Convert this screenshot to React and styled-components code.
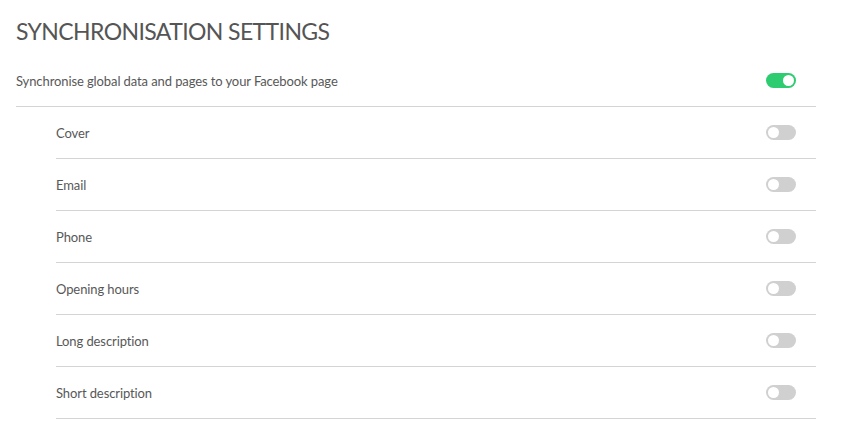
import React, { useState } from 'react';
import styled, { createGlobalStyle } from 'styled-components';

const GlobalStyle = createGlobalStyle`
  body {
    margin: 0;
    background: #fff;
    font-family: Lato, "Open Sans", sans-serif;
    color: #555;
  }
`;

const Page = styled.div`
  width: 800px;
  padding: 16px 16px 0;
`;

const Title = styled.h1`
  margin: 0 0 9px;
  font-size: 23px;
  line-height: 30px;
  font-weight: 400;
  color: #555;
  letter-spacing: -0.6px;
`;

const Row = styled.div`
  display: flex;
  align-items: center;
  justify-content: space-between;
  height: 51px;
  margin-left: ${props => (props.nested ? '40px' : '0')};
  padding-right: 20px;
  border-bottom: 1px solid #d4d4d4;
`;

const Label = styled.span`
  font-size: 13px;
  color: #585858;
  letter-spacing: -0.1px;
`;

const Track = styled.button`
  position: relative;
  width: 30px;
  height: 15px;
  padding: 0;
  border: none;
  border-radius: 8px;
  background: ${props => (props.on ? '#2ecc71' : '#d0d0d0')};
  cursor: pointer;
`;

const Knob = styled.span`
  position: absolute;
  top: 2px;
  left: ${props => (props.on ? '17px' : '2px')};
  width: 11px;
  height: 11px;
  border-radius: 50%;
  background: #fff;
`;

const Toggle = ({ on, onClick }) => (
  <Track on={on ? 1 : 0} onClick={onClick}>
    <Knob on={on ? 1 : 0} />
  </Track>
);

const fields = ['Cover', 'Email', 'Phone', 'Opening hours', 'Long description', 'Short description'];

export default function App() {
  const [global, setGlobal] = useState(true);
  const [enabled, setEnabled] = useState({});

  return (
    <Page>
      <GlobalStyle />
      <Title>SYNCHRONISATION SETTINGS</Title>
      <Row>
        <Label>Synchronise global data and pages to your Facebook page</Label>
        <Toggle on={global} onClick={() => setGlobal(!global)} />
      </Row>
      {fields.map(name => (
        <Row nested key={name}>
          <Label>{name}</Label>
          <Toggle
            on={!!enabled[name]}
            onClick={() => setEnabled({ ...enabled, [name]: !enabled[name] })}
          />
        </Row>
      ))}
    </Page>
  );
}
